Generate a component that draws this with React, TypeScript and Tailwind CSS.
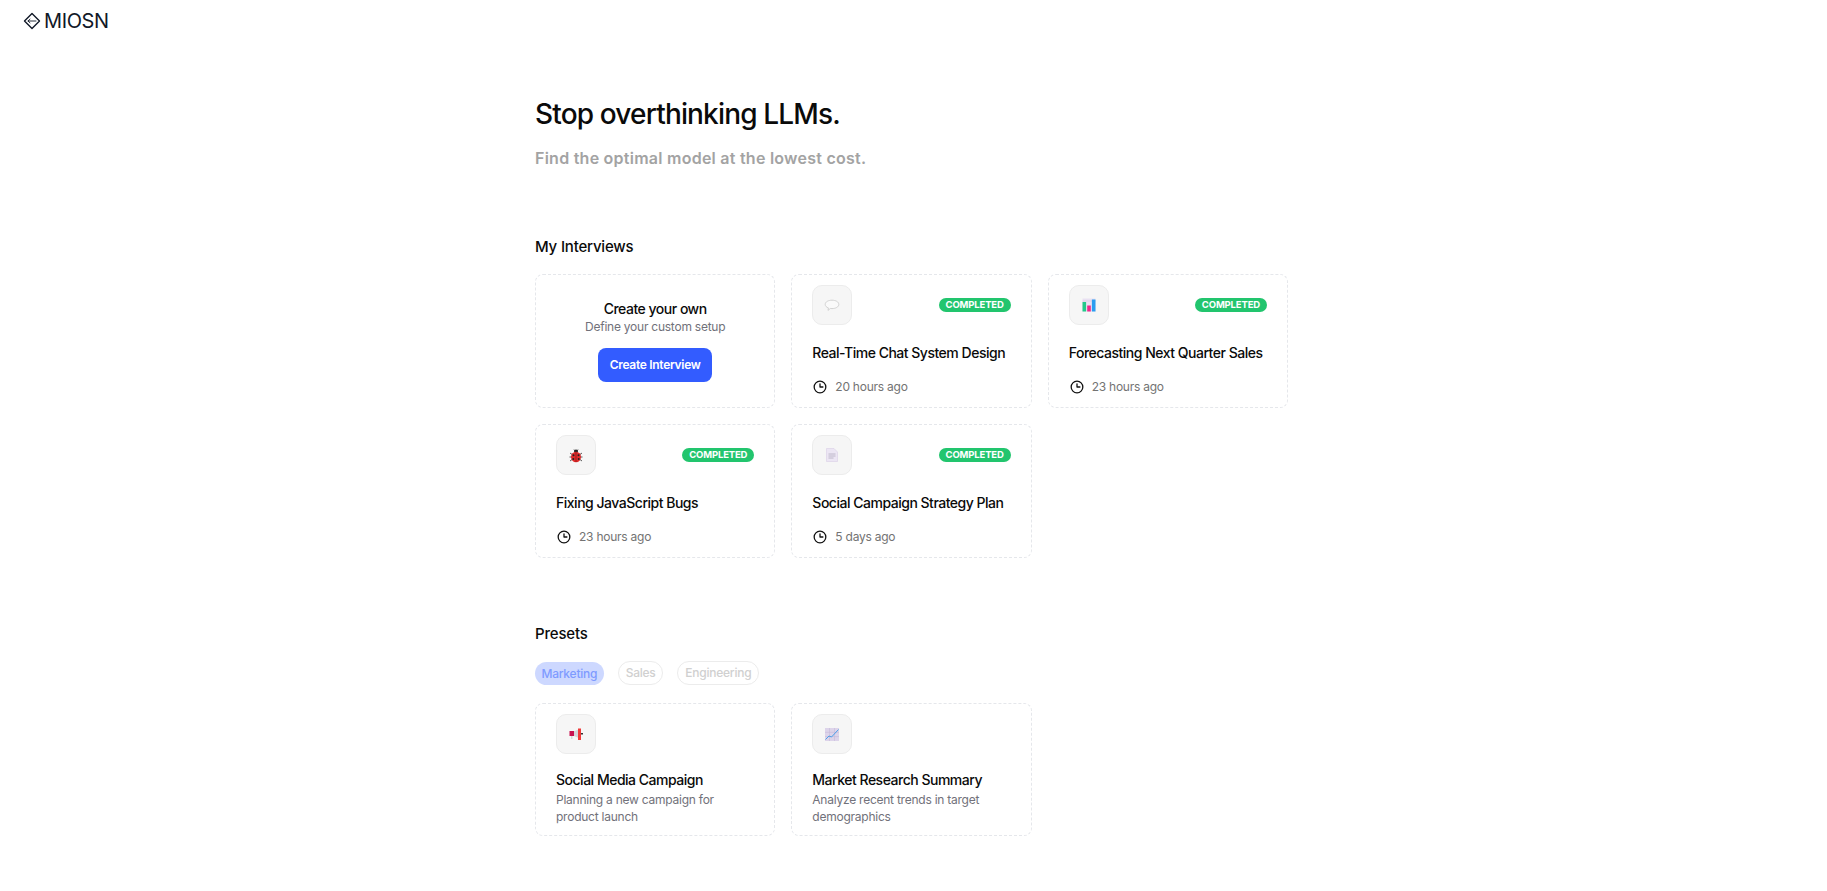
import React from "react";

const font = { fontFamily: "Inter, 'Liberation Sans', sans-serif" };

function Logo() {
  return (
    <svg width="18" height="18" viewBox="0 0 18 18" fill="none" stroke="#111827" strokeWidth="1.4">
      <path d="M9 1.5 16.5 9 9 16.5 1.5 9Z" strokeLinejoin="round" />
      <path d="M5 9h8M7 7.200 5 9l2 1.800" strokeLinecap="round" strokeLinejoin="round" strokeWidth="0.9" />
    </svg>
  );
}

function Clock() {
  return (
    <svg width="14" height="14" viewBox="0 0 24 24" fill="none" stroke="#111" strokeWidth="2.2" strokeLinecap="round" strokeLinejoin="round">
      <circle cx="12" cy="12" r="10" />
      <path d="M12 6.5V12h5" />
    </svg>
  );
}

function Chat() {
  return (
    <svg width="16" height="13" viewBox="0 0 16 13" fill="#fafafa" stroke="#c9c9c9" strokeWidth="0.8">
      <path d="M8 1.2c3.6 0 6.8 1.6 6.8 4.200S11.600 9.600 8 9.600c-.6 0-1.200 0-1.700-.1L4 11.400l.4-2.500C2.400 8.300 1.200 7 1.200 5.400 1.200 2.800 4.400 1.200 8 1.200Z" />
    </svg>
  );
}

function Bars() {
  return (
    <svg width="14" height="14" viewBox="0 0 14 14">
      <rect x="0.5" y="0.5" width="13" height="13" fill="#e9e1f2" />
      <path d="M0.5 3h13" stroke="#d4c8e2" strokeWidth="0.6" />
      <rect x="0.5" y="4" width="3.6" height="9.5" fill="#22c98a" />
      <rect x="5.2" y="7.5" width="3.6" height="6" fill="#f0288a" />
      <rect x="9.9" y="1.5" width="3.6" height="12" fill="#2a9df0" />
    </svg>
  );
}

function Bug() {
  return (
    <svg width="14" height="15" viewBox="0 0 14 15">
      <path d="M1 5 3 6.500M13 5l-2 1.500M.5 9h2.500M13.500 9H11M1 13l2-1.500M13 13l-2-1.500M5 1.500 6 3M9 1.500 8 3" stroke="#333" strokeWidth="0.8" />
      <circle cx="7" cy="3.500" r="2" fill="#222" />
      <ellipse cx="7" cy="9" rx="5" ry="5.200" fill="#e02a2a" />
      <path d="M7 4v10" stroke="#5b1111" strokeWidth="0.5" />
      <circle cx="4.500" cy="7.200" r="1" fill="#222" />
      <circle cx="9.500" cy="7.200" r="1" fill="#222" />
      <circle cx="4.300" cy="11" r="1" fill="#222" />
      <circle cx="9.700" cy="11" r="1" fill="#222" />
    </svg>
  );
}

function Doc() {
  return (
    <svg width="12" height="14" viewBox="0 0 12 14">
      <path d="M.5.5H8L11.500 4v9.500H.5Z" fill="#ece6f4" stroke="#dcd3e8" strokeWidth="0.7" />
      <path d="M2.500 6h7M2.500 8h7M2.500 10h5" stroke="#b9b2c4" strokeWidth="0.9" />
    </svg>
  );
}

function Mega() {
  return (
    <svg width="15" height="13" viewBox="0 0 15 13">
      <rect x="0.500" y="3" width="4.500" height="5" fill="#c8114f" />
      <rect x="2" y="8" width="1.500" height="3" fill="#d8d8d8" />
      <path d="M5 3.200 9 1.800v8L5 8Z" fill="#d4d4d8" />
      <rect x="9" y="0.500" width="3" height="11.500" fill="#f03a3a" />
      <rect x="12" y="5" width="2" height="1.500" fill="#333" />
    </svg>
  );
}

function Chart() {
  return (
    <svg width="14" height="13" viewBox="0 0 14 13">
      <rect width="14" height="13" fill="#ddd4ea" />
      <path d="M4.500 0v13M9.500 0v13M0 4.300h14M0 8.600h14" stroke="#c6bad8" strokeWidth="0.6" />
      <path d="M.5 11.500 4 8l2.500 1L13.500 1.500" fill="none" stroke="#3b9aea" strokeWidth="0.9" />
    </svg>
  );
}

function IconBox({ children }: { children: React.ReactNode }) {
  return (
    <div className="flex h-10 w-10 items-center justify-center rounded-[10px] border border-[#ececec] bg-[#f6f6f6]">
      {children}
    </div>
  );
}

function InterviewCard({ icon, title, time }: { icon: React.ReactNode; title: string; time: string }) {
  return (
    <div className="flex h-[134px] flex-col rounded-lg border border-dashed border-[#e5e7eb] pt-[10px] pr-[20px] pl-[20px]">
      <div className="flex items-start justify-between">
        <IconBox>{icon}</IconBox>
        <span className="mt-[13px] rounded-full bg-[#22c56e] px-[7px] text-[9.5px] leading-[14px] font-bold tracking-[-0.15px] text-white">
          COMPLETED
        </span>
      </div>
      <div className="mt-[18px] text-[14px] leading-5 font-[450] tracking-[-0.035em] whitespace-nowrap text-[#0a0a0a]">{title}</div>
      <div className="mt-[16px] flex items-center gap-[8px] pl-[1px] text-[12px] leading-4 tracking-[-0.02em] text-[#737373]">
        <Clock />
        <span>{time}</span>
      </div>
    </div>
  );
}

function PresetCard({ icon, title, desc }: { icon: React.ReactNode; title: string; desc: string }) {
  return (
    <div className="flex h-[133px] flex-col rounded-lg border border-dashed border-[#e5e7eb] pt-[10px] pr-[20px] pl-[20px]">
      <IconBox>{icon}</IconBox>
      <div className="mt-[16px] text-[14px] leading-5 font-[450] tracking-[-0.035em] text-[#0a0a0a]">{title}</div>
      <div className="mt-[1px] text-[12px] leading-[17px] tracking-[-0.02em] text-[#71717a]">{desc}</div>
    </div>
  );
}

export default function App() {
  return (
    <div className="min-h-[891px] bg-white" style={font}>
      <header className="flex h-[42px] items-center gap-[3px] pl-[23px]">
        <Logo />
        <span className="text-[20px] leading-7 font-normal tracking-[-0.4px] text-[#111827]">MIOSN</span>
      </header>
      <main className="ml-[535px] w-[753px] pt-[54px]">
        <h1 className="text-[28px] leading-9 font-[450] tracking-[-0.03em] text-[#0a0a0a]">Stop overthinking LLMs.</h1>
        <p className="mt-[14px] text-[16px] leading-6 font-semibold tracking-[0.25px] text-[#a3a3a3]">Find the optimal model at the lowest cost.</p>
        <h2 className="mt-[67px] text-[15px] leading-5 font-[450] tracking-[-0.012em] text-[#0a0a0a]">My Interviews</h2>
        <div className="mt-[17px] grid grid-cols-3 gap-4">
          <div className="flex h-[134px] flex-col items-center rounded-lg border border-dashed border-[#e5e7eb] pt-[24px]">
            <div className="text-[14px] leading-5 font-[450] tracking-[-0.035em] text-[#0a0a0a]">Create your own</div>
            <div className="text-[12px] leading-4 tracking-[-0.02em] text-[#71717a]">Define your custom setup</div>
            <button className="mt-[13px] h-[34px] w-[114px] rounded-lg bg-[#335cff] text-[12px] font-semibold tracking-[-0.025em] text-white">Create Interview</button>
          </div>
          <InterviewCard icon={<Chat />} title="Real-Time Chat System Design" time="20 hours ago" />
          <InterviewCard icon={<Bars />} title="Forecasting Next Quarter Sales" time="23 hours ago" />
          <InterviewCard icon={<Bug />} title="Fixing JavaScript Bugs" time="23 hours ago" />
          <InterviewCard icon={<Doc />} title="Social Campaign Strategy Plan" time="5 days ago" />
        </div>
        <h2 className="mt-[66px] text-[15px] leading-5 font-[450] tracking-[-0.012em] text-[#0a0a0a]">Presets</h2>
        <div className="mt-[17px] flex items-center gap-[14px]">
          <span className="rounded-full bg-[#cdd8ff] px-[6.500px] text-[12px] leading-[23px] font-medium tracking-[-0.02em] text-[#7f9bff]">Marketing</span>
          <span className="rounded-full border border-[#ececec] px-[7px] text-[12px] leading-[22px] font-medium tracking-[-0.025em] text-[#d0d0d0]">Sales</span>
          <span className="rounded-full border border-[#ececec] px-[7px] text-[12px] leading-[22px] font-medium tracking-[-0.02em] text-[#d0d0d0]">Engineering</span>
        </div>
        <div className="mt-[18px] grid grid-cols-3 gap-4">
          <PresetCard icon={<Mega />} title="Social Media Campaign" desc="Planning a new campaign for product launch" />
          <PresetCard icon={<Chart />} title="Market Research Summary" desc="Analyze recent trends in target demographics" />
        </div>
      </main>
    </div>
  );
}
